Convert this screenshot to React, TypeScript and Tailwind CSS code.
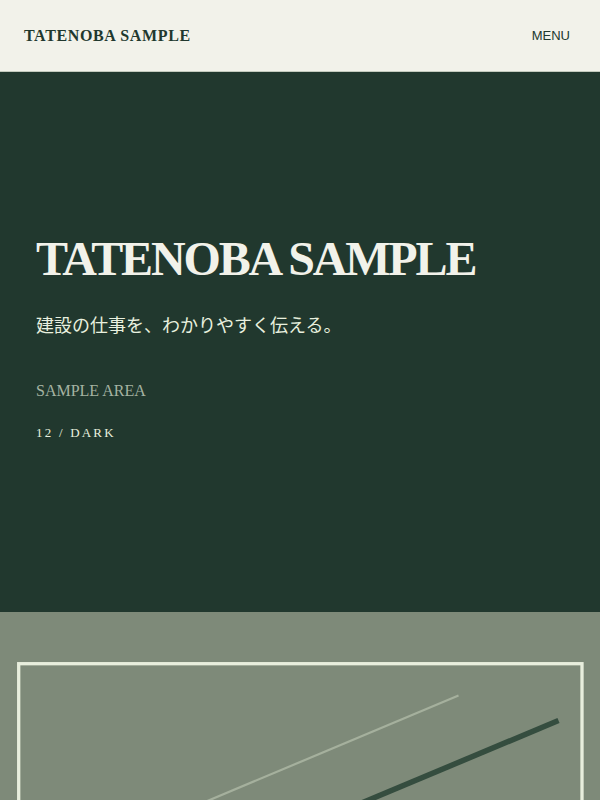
const SERIF = "font-['Liberation_Serif','Noto_Sans_CJK_JP',serif]"

function Header() {
  return (
    <header className="flex h-[72px] items-center justify-between border-b border-[#c3cabd] bg-[#f2f2ea] pr-[30px] pl-6">
      <a href="#top" className="text-base font-bold tracking-[0.04em] text-[#21382e]">
        TATENOBA SAMPLE
      </a>
      <button
        type="button"
        className="font-['Liberation_Sans',sans-serif] text-[13px] leading-5 text-[#21382e]"
      >
        MENU
      </button>
    </header>
  )
}

function Hero() {
  return (
    <section id="top" className="flex min-h-[540px] flex-col justify-center bg-[#21382e] px-9 pb-1">
      <h1 className="text-5xl font-bold tracking-[-0.045em] text-[#f2f2ea]">TATENOBA SAMPLE</h1>
      <p className="mt-7 text-lg leading-[30px] text-[#e8f0df]">建設の仕事を、わかりやすく伝える。</p>
      <p className="mt-9 text-base leading-7 text-[#a5b3a2]">SAMPLE AREA</p>
      <p className="mt-4 text-[13px] leading-6 tracking-[0.17em] text-[#e8f0df]">12 / DARK</p>
    </section>
  )
}

function Drawing() {
  return (
    <section className="bg-[#7e8a79]">
      {/* the frame and both beams run off the lower edge */}
      <svg viewBox="0 0 600 188" className="block w-full" fill="none" aria-hidden="true">
        <rect x="18.7" y="51.7" width="563.3" height="396" stroke="#e8eedd" strokeWidth="3.3" />
        <path d="M458.5 83.5 L58.5 251.5" stroke="#a5b09d" strokeWidth="2.2" />
        <path d="M558.5 108.5 L58.5 318" stroke="#354d3f" strokeWidth="5.5" />
      </svg>
    </section>
  )
}

export default function App() {
  return (
    <div className={`min-h-screen bg-[#7e8a79] ${SERIF}`}>
      <Header />
      <main>
        <Hero />
        <Drawing />
      </main>
    </div>
  )
}
